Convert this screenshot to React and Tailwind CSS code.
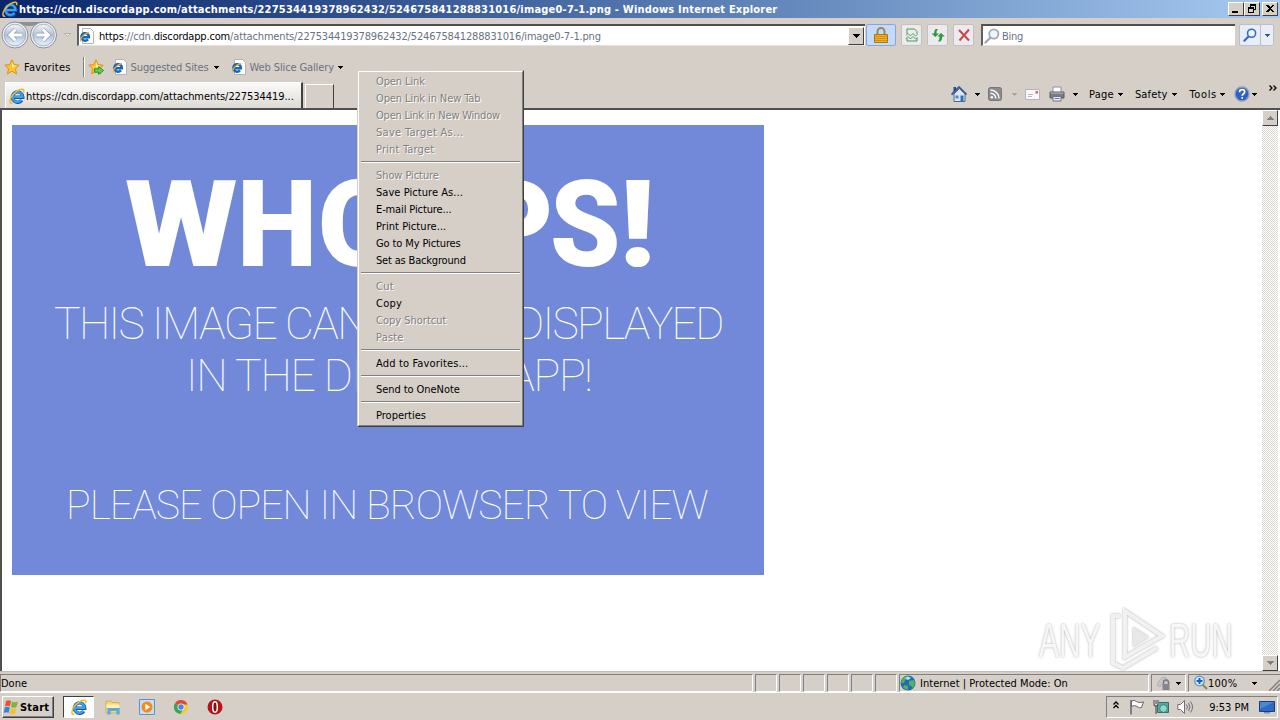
import { useLayoutEffect, useRef } from 'react';

const Label = ({ w, children, className = '' }) => {
    const ref = useRef(null);

    useLayoutEffect(() => {
        const el = ref.current;
        el.style.letterSpacing = '0px';
        const natural = el.offsetWidth;
        el.style.letterSpacing = `${(w - natural) / el.textContent.length}px`;
    }, [w, children]);

    return <span ref={ref} className={`inline-block whitespace-pre shrink-0 pt-0.5 ${className}`}>{children}</span>;
};

const IeIcon = ({ className = 'size-4' }) => (
    <svg viewBox="0 0 16 16" className={`shrink-0 ${className}`} fill="none">
        <path d="M4.5 9.3h9.3a5.2 5.2 0 1 0-1 2.9" stroke="#1459a8" strokeWidth="3.4" />
        <path d="M4.5 9h9a5 5 0 1 0-1 2.9" stroke="#3f9fe8" strokeWidth="2.2" />
        <path d="M3.2 15C.6 15.8.2 13 2 9.5 4.6 4.5 10.5.6 13.6 1.2c1.3.3 1.5 1.6.9 3" stroke="#f3b92b" strokeWidth="1.5" />
    </svg>
);

const PageIeIcon = () => (
    <svg viewBox="0 0 16 16" className="size-4 shrink-0" fill="none">
        <path d="M3.5.5h8l3 3v12h-11z" fill="#fdfdfd" stroke="#b4b4b4" />
        <path d="M3.3 9.2h6.600a3.800 3.800 0 1 0-.9 2.200" stroke="#1766b8" strokeWidth="2.4" />
        <path d="M1.6 13.500C.6 11 4 6 10 4.400" stroke="#e8b53a" strokeWidth="1.1" />
    </svg>
);

const Caret = ({ className = 'text-black' }) => (
    <svg viewBox="0 0 5 3" className={`w-[5px] h-[3px] shrink-0 ${className}`} shapeRendering="crispEdges">
        <path d="M0 0h5L2.5 3z" fill="currentColor" />
    </svg>
);

const Star = ({ arrow }) => (
    <svg viewBox="0 0 16 16" className="size-4 shrink-0">
        <path d="M8 .8l2.200 4.800 5 .6-3.700 3.500 1 5.200L8 12.300l-4.500 2.600 1-5.200L.8 6.200l5-.6z" fill="#ffc530" stroke="#d98a14" strokeWidth=".9" />
        <path d="M8 2.800l1.500 3.500 2.700.4-4.200 2z" fill="#fff0a0" />
        {arrow && <path d="M6.500 9.700h4.200V7.600l4.800 3.900-4.800 3.900v-2.200H6.500z" fill="#5ed04c" stroke="#20872a" strokeWidth=".9" />}
    </svg>
);

const NavButtons = () => (
    <svg viewBox="0 0 58 28" className="w-[58px] h-7 shrink-0" fill="none">
        <defs>
            <linearGradient id="glass" x1="0" y1="0" x2="0" y2="1">
                <stop offset="0" stopColor="#f4f6f9" />
                <stop offset=".5" stopColor="#b3c0d6" />
                <stop offset="1" stopColor="#e6f4ff" />
            </linearGradient>
        </defs>
        <path d="M12 1h34q-9 4-17 4T12 1z" fill="#8d8f9b" />
        {[15, 43.5].map((x) => (
            <g key={x}>
                <circle cx={x} cy="14" r="13" fill="#edf0f4" stroke="#8a8f9d" strokeWidth="1" />
                <circle cx={x} cy="14" r="10.800" fill="url(#glass)" stroke="#98a5b9" strokeWidth=".8" />
            </g>
        ))}
        <path d="M22 14H10m5.500-5.500L10 14l5.500 5.500M36.500 14h12M43 8.500l5.500 5.500-5.500 5.500" stroke="#8c9db8" strokeWidth="4.400" />
        <path d="M22 14H10m5.500-5.500L10 14l5.500 5.500M36.500 14h12M43 8.500l5.500 5.500-5.500 5.500" stroke="#fff" strokeWidth="3" />
    </svg>
);

const Magnifier = ({ className, color }) => (
    <svg viewBox="0 0 16 16" className={`shrink-0 ${className}`} fill="none">
        <path d="M1.500 14.500l5-5" stroke={color} strokeWidth="2.400" strokeLinecap="round" />
        <circle cx="9.800" cy="6" r="4.600" fill="#eef5ff" stroke={color} strokeWidth="1.800" />
    </svg>
);

const CaptionButton = ({ children }) => (
    <button className="w-4 h-3.5 bg-[#d6cfc8] border border-t-white border-l-white border-r-[#404040] border-b-[#404040]">
        <svg viewBox="0 0 14 12" className="w-3.5 h-3" shapeRendering="crispEdges">{children}</svg>
    </button>
);

const TitleBar = () => (
    <header className="flex items-center h-[18px] pl-0.5 pr-0.5 bg-linear-to-r from-[#0a246a] to-[#a6caf0]">
        <IeIcon />
        <Label w={758} className="ml-px font-bold text-white">https://cdn.discordapp.com/attachments/227534419378962432/524675841288831016/image0-7-1.png - Windows Internet Explorer</Label>
        <div className="flex ml-auto">
            <CaptionButton><path d="M3 8h6v2H3z" /></CaptionButton>
            <CaptionButton><path d="M5 1h6v6H9V6h1V3H6v1H5zM3 4h6v6H3zm1 2v3h4V6z" fillRule="evenodd" /></CaptionButton>
            <div className="w-0.5" />
            <CaptionButton><path d="M3 2h2l2 2 2-2h2L8 5.500 11 9H9L7 7 5 9H3l3-3.500z" /></CaptionButton>
        </div>
    </header>
);

const ToolButton = ({ children, className }) => (
    <button className={`flex items-center justify-center h-[22px] border rounded-xs ${className}`}>{children}</button>
);

const AddressBar = () => (
    <div className="flex items-center h-[34px]">
        <div className="w-[57px] flex"><NavButtons /></div>
        <div className="w-5 flex justify-center">
            <svg viewBox="0 0 7 4" className="w-[7px] h-1"><path d="M.5.5h6l-3 3z" fill="#e8e6e2" stroke="#aaa69f" strokeWidth=".8" /></svg>
        </div>
        <div className="flex items-center w-[788px] h-[22px] bg-white border-t-2 border-l-2 border-t-[#505050] border-l-[#606060] border-b border-b-[#e4e0da]">
            <PageIeIcon />
            <Label w={502} className="ml-1 text-gray-500">
                <span className="text-black">https</span>://cdn.<span className="text-black">discordapp.com</span>/attachments/227534419378962432/524675841288831016/image0-7-1.png
            </Label>
            <button className="flex items-center justify-center w-4 h-[18px] ml-auto mr-px bg-[#d6cfc8] border border-t-white border-l-white border-r-[#404040] border-b-[#404040]">
                <svg viewBox="0 0 7 4" className="w-[7px] h-1" shapeRendering="crispEdges"><path d="M0 0h7L3.500 4z" /></svg>
            </button>
        </div>
        <ToolButton className="w-[30px] ml-px border-[#7fa9e6] bg-[#c4daf8]">
            <svg viewBox="0 0 14 16" className="w-3.5 h-4" fill="none">
                <path d="M3.500 8V4.500a3.500 3.500 0 0 1 7 0V8" stroke="#9a8a58" strokeWidth="2" />
                <path d="M.5 7.500h13v8H.5z" fill="#f0b020" stroke="#a87818" />
                <path d="M1 9.500h12M1 11.500h12M1 13.500h12" stroke="#c78a14" strokeWidth=".8" />
            </svg>
        </ToolButton>
        <ToolButton className="w-[21px] ml-[5px] border-[#c2c0c4] bg-[#eceaee]">
            <svg viewBox="0 0 14 14" className="size-3.5 shrink-0" fill="none" stroke="#459a4a">
                <path d="M2 6V1h7.500L12 3.500V6M2 10v3h10v-3" />
                <path d="M1 7.500l2-2 2.500 2.500L8 5.500 10.500 8l2-1.500M1 10.500l2-2L5.500 11 8 8.500l2.500 2.500 2-1.500" strokeWidth=".9" />
            </svg>
        </ToolButton>
        <ToolButton className="w-[21px] ml-[5px] border-[#c2c0c4] bg-[#eceaee]">
            <svg viewBox="0 0 14 14" className="size-3.5 shrink-0" fill="#2f9a3c">
                <path d="M4.500 1H7Q5 3 5.500 5.500H8L4.300 9 .5 5.500H3Q3 3 4.500 1z" />
                <path d="M9.500 13.500H7Q9 11.500 8.500 8.500H6.300L10 5l3.800 3.500h-2.500q.3 3-1.800 5z" />
            </svg>
        </ToolButton>
        <ToolButton className="w-[21px] ml-[5px] border-[#c2c0c4] bg-[#eceaee]">
            <svg viewBox="0 0 14 14" className="size-3.5 shrink-0" fill="none" stroke="#c8484c" strokeWidth="2">
                <path d="M2 2l10 10.500M12 1.500L2.500 12.500" />
            </svg>
        </ToolButton>
        <div className="flex items-center w-[254px] h-[22px] ml-[7px] bg-white border-t-2 border-l-2 border-t-[#505050] border-l-[#606060] border-b border-b-[#e4e0da]">
            <Magnifier className="size-4 ml-px" color="#a3a8b5" />
            <Label w={21} className="ml-0.5 text-gray-500">Bing</Label>
        </div>
        <div className="flex ml-1">
            <ToolButton className="w-[22px] border-[#b7bfd0] bg-[#e9edf6]"><Magnifier className="size-3.5" color="#2e6bc8" /></ToolButton>
            <ToolButton className="w-[14px] border-[#b7bfd0] bg-[#e9edf6] -ml-px"><Caret className="text-[#2358a8]" /></ToolButton>
        </div>
    </div>
);

const FavoritesBar = () => (
    <div className="flex items-center h-[30px] pl-1">
        <Star />
        <Label w={47} className="ml-1 -mt-px">Favorites</Label>
        <div className="w-0.5 h-5 ml-3 border-l border-[#808080] bg-white" />
        <div className="ml-[3px] flex"><Star arrow /></div>
        <div className="ml-2 flex"><PageIeIcon /></div>
        <Label w={78} className="ml-[3px] text-gray-500">Suggested Sites</Label>
        <div className="ml-[5px] flex"><Caret /></div>
        <div className="ml-3 flex"><PageIeIcon /></div>
        <Label w={84} className="ml-[3px] text-gray-500">Web Slice Gallery</Label>
        <div className="ml-1 flex"><Caret /></div>
    </div>
);

const TabRow = () => (
    <div className="flex items-center h-[26px] pl-[5px]">
        <div className="flex items-center w-[298px] h-[26px] pl-[3px] bg-linear-to-b from-[#fbfafa] to-[#dedad5] border-t border-t-white border-l border-l-white border-r-2 border-r-[#404040]">
            <IeIcon />
            <Label w={268} className="ml-px">https://cdn.discordapp.com/attachments/227534419...</Label>
        </div>
        <div className="w-[29px] h-[24px] ml-0.5 self-end border-t border-l border-t-white border-l-white border-r border-r-[#404040]" />
        <div className="flex items-center w-[329px] ml-auto -mt-1 pt-0.5">
            <svg viewBox="0 0 16 16" className="size-4">
                <path d="M3 8v7.500h11V8L8.500 2.500z" fill="#dce7f5" stroke="#46689e" />
                <path d="M.5 8.500L8 1l7.500 7.500" fill="none" stroke="#3b5a9c" strokeWidth="1.800" />
                <path d="M2.500 1h2.500v3l-2.500 2z" fill="#29498c" />
                <path d="M9.500 9.500h3v6h-3z" fill="#2c72a8" />
                <path d="M4.500 9.500h3v3h-3z" fill="#5685c4" />
            </svg>
            <div className="ml-2 flex"><Caret /></div>
            <svg viewBox="0 0 14 14" className="size-3.5 ml-2" fill="none">
                <rect x=".5" y=".5" width="13" height="13" rx="2" fill="#8c8c8c" stroke="#777" />
                <circle cx="3.800" cy="10.300" r="1.300" fill="#fff" />
                <path d="M2.500 6.200a5.300 5.300 0 0 1 5.300 5.300M2.500 3a8.500 8.500 0 0 1 8.500 8.500" stroke="#fff" strokeWidth="1.400" />
            </svg>
            <div className="ml-[10px] flex"><Caret className="text-[#a8a39c]" /></div>
            <svg viewBox="0 0 15 11" className="w-[15px] h-[11px] ml-2">
                <path d="M.5.5h14v10H.5z" fill="#f8f8f8" stroke="#b5b5b8" />
                <path d="M10.500 2h2.500v2.500h-2.500z" fill="#c86a6a" />
                <path d="M3 5.500h5M3 7.500h4" stroke="#bbb" />
            </svg>
            <svg viewBox="0 0 16 16" className="size-4 ml-[9px]">
                <path d="M4 1h8v6H4z" fill="#fff" stroke="#909098" />
                <path d="M1 6h14v6H1z" fill="#777c86" stroke="#555b66" />
                <path d="M1.500 7h13" stroke="#b8bcc5" />
                <path d="M4 10.500h8v4.500H4z" fill="#e8edf5" stroke="#70747e" />
                <path d="M5.500 12.500h5" stroke="#4e83c8" />
            </svg>
            <div className="ml-2 flex"><Caret /></div>
            <Label w={25} className="ml-[11px]">Page</Label>
            <div className="ml-1 flex"><Caret /></div>
            <Label w={33} className="ml-3">Safety</Label>
            <div className="ml-1 flex"><Caret /></div>
            <Label w={27} className="ml-[13px]">Tools</Label>
            <div className="ml-[3px] flex"><Caret /></div>
            <svg viewBox="0 0 16 16" className="size-4 ml-[9px]">
                <circle cx="8" cy="8" r="7" fill="#2f5fc4" stroke="#8d9cc0" strokeWidth="1.400" />
                <path d="M5.500 6.200q0-2.600 2.600-2.600t2.600 2.300c0 1.800-2.500 1.900-2.500 3.900M8.200 11v1.800" fill="none" stroke="#fff" strokeWidth="1.700" />
            </svg>
            <div className="ml-0.5 flex"><Caret /></div>
            <svg viewBox="0 0 8 6" className="w-2 h-1.5 ml-3 -mt-3" fill="none" stroke="#000" strokeWidth="1.300">
                <path d="M.5.5L3 3 .5 5.500M4.500.5L7 3 4.500 5.500" />
            </svg>
        </div>
    </div>
);

const ScrollButton = ({ d }) => (
    <button className="flex items-center justify-center w-4 h-4 bg-[#d6cfc8] border border-t-white border-l-white border-r-[#404040] border-b-[#404040]">
        <svg viewBox="0 0 7 4" className="w-[7px] h-1" shapeRendering="crispEdges"><path d={d} fill="#808080" /></svg>
    </button>
);

const Whoops = () => (
    <div className="w-[752px] h-[450px] mt-[15px] ml-2.5 bg-[#7289da] text-white flex flex-col shrink-0 overflow-hidden">
        <h1 className="pl-[113px] pt-[38px] h-[160px] font-[Roboto] font-black text-[120px] leading-[121px] flex">
            <Label w={112} className="origin-left scale-x-[1.08]">W</Label>
            <Label w={80} className="origin-left scale-x-[0.95]">H</Label>
            <Label w={232}>OOP</Label>
            <Label w={69} className="origin-left scale-x-[0.94]">S</Label>
            <Label w={32} className="origin-left scale-x-[1.1]">!</Label>
        </h1>
        <p className="pl-[42px] h-[52px] pt-[11px] font-[Roboto] font-thin text-[44.500px] leading-[52px] flex">
            <Label w={669}>THIS IMAGE CANNOT BE DISPLAYED</Label>
        </p>
        <p className="pl-[174px] h-[52px] pt-[11px] font-[Roboto] font-thin text-[44.500px] leading-[52px] flex">
            <Label w={406}>IN THE DISCORD APP!</Label>
        </p>
        <p className="pl-[54px] mt-[88px] font-[Roboto] font-thin text-[41px] leading-[52px] flex">
            <Label w={642}>PLEASE OPEN IN BROWSER TO VIEW</Label>
        </p>
    </div>
);

const Watermark = () => (
    <div className="absolute left-[1039px] top-[607px] flex items-center h-[66px] font-['Liberation_Sans'] text-[49px] leading-[66px] text-[#f7f7f7] [text-shadow:0_0_3px_#aaa]">
        <span className="inline-block w-[70px] origin-left scale-x-[0.61]">ANY</span>
        <svg viewBox="0 0 56 64" className="w-14 h-16 shrink-0 drop-shadow-[0_0_1px_#aaa]" fill="none" stroke="#f1f1f1" strokeWidth="4">
            <path d="M16 3v46l37-21z" />
            <path d="M11 8H4v47l10 5 34-20" />
            <path d="M24 19v20l16-10z" fill="#e8e8e8" stroke="none" />
        </svg>
        <span className="inline-block w-[66px] ml-1 origin-left scale-x-[0.6]">RUN</span>
    </div>
);

const menuGroups = [
    [
        { text: 'Open Link', w: 49, off: true },
        { text: 'Open Link in New Tab', w: 104, off: true },
        { text: 'Open Link in New Window', w: 124, off: true },
        { text: 'Save Target As...', w: 87, off: true },
        { text: 'Print Target', w: 58, off: true },
    ],
    [
        { text: 'Show Picture', w: 63, off: true },
        { text: 'Save Picture As...', w: 87 },
        { text: 'E-mail Picture...', w: 76 },
        { text: 'Print Picture...', w: 70 },
        { text: 'Go to My Pictures', w: 85 },
        { text: 'Set as Background', w: 90 },
    ],
    [
        { text: 'Cut', w: 18, off: true },
        { text: 'Copy', w: 26 },
        { text: 'Copy Shortcut', w: 70, off: true },
        { text: 'Paste', w: 28, off: true },
    ],
    [{ text: 'Add to Favorites...', w: 92 }],
    [{ text: 'Send to OneNote', w: 84 }],
    [{ text: 'Properties', w: 50 }],
];

const ContextMenu = () => (
    <div className="absolute left-[357px] top-[70px] w-[167px] border border-[#d6cfc8] border-r-[#404040] border-b-[#404040] bg-[#d6cfc8]">
        <div className="border border-t-white border-l-white border-r-[#808080] border-b-[#808080] pb-0.5 px-0.5">
            {menuGroups.map((group, i) => (
                <div key={i}>
                    {i > 0 && <div className="h-[9px] pt-1"><div className="h-0.5 bg-white border-t border-[#808080]" /></div>}
                    {group.map(({ text, w, off }) => (
                        <div key={text} className="flex items-center h-[17px] pl-[15px]">
                            <Label w={w} className={off ? 'text-[#808080] [text-shadow:1px_1px_0_#fff]' : ''}>{text}</Label>
                        </div>
                    ))}
                </div>
            ))}
        </div>
    </div>
);

const StatusPane = ({ className, children }) => (
    <div className={`flex items-center h-[18px] border border-t-[#808080] border-l-[#808080] border-r-white border-b-white ${className}`}>{children}</div>
);

const StatusBar = () => (
    <div className="flex gap-0.5 h-[21px] pt-0.5 border-t border-[#c0bcb5]">
        <StatusPane className="w-[753px]"><Label w={26}>Done</Label></StatusPane>
        {[0, 1, 2, 3, 4, 5].map((n) => <StatusPane key={n} className="w-[22px]" />)}
        <StatusPane className="w-[250px]">
            <svg viewBox="0 0 16 16" className="size-4">
                <circle cx="8" cy="8" r="7.500" fill="#2468b8" />
                <path d="M2 4q3-4 7-3l-1 3-3 1-1 3-3 0zM9 6l5-1q2 4-1 8l-2-2-2-1zM4 10l4 1v4q-4-1-5-3z" fill="#52b45a" />
                <path d="M5 3q4-2 6 0L8 5z" fill="#b8e4ff" />
            </svg>
            <Label w={148} className="ml-1">Internet | Protected Mode: On</Label>
        </StatusPane>
        <StatusPane className="w-[35px] justify-between px-1">
            <svg viewBox="0 0 16 16" className="size-4">
                <path d="M1 10q3-8 8-8l5 6-5 3-2-3-3 4z" fill="#c6c3c6" stroke="#a0a0a5" strokeWidth=".6" />
                <path d="M7.500 9V7.500a2.500 2.500 0 0 1 5 0V9" fill="none" stroke="#77777c" strokeWidth="1.300" />
                <path d="M6.500 9h7v6h-7z" fill="#85858a" />
            </svg>
            <Caret />
        </StatusPane>
        <StatusPane className="flex-1 pl-1 border-r-0">
            <svg viewBox="0 0 16 16" className="size-4" fill="none">
                <path d="M9.500 9.500l4.500 4.500" stroke="#a08050" strokeWidth="2.200" />
                <circle cx="6.500" cy="6" r="4.800" fill="#d8ebff" stroke="#5f93cc" strokeWidth="1.300" />
                <path d="M6.500 3v6M3.500 6h6" stroke="#1c5fc0" strokeWidth="2" />
            </svg>
            <Label w={29} className="-ml-px">100%</Label>
            <div className="ml-[15px] flex"><Caret /></div>
            <svg viewBox="0 0 12 12" className="size-3 ml-auto self-end" stroke="#808080" strokeWidth="1.500"><path d="M1 12L12 1M5 12l7-7M9 12l3-3" /></svg>
        </StatusPane>
    </div>
);

const Taskbar = () => (
    <div className="flex items-center h-[27px] pl-0.5 pr-0.5 border-t border-white">
        <button className="flex items-center w-[52px] h-[22px] mt-px border border-t-white border-l-white border-r-[#404040] border-b-[#404040] shadow-[inset_-1px_-1px_#808080]">
            <svg viewBox="0 0 16 16" className="size-4 shrink-0">
                <path d="M3 2q3-1.500 5 0L7 7.500q-2-1.500-5 0z" fill="#e8542c" />
                <path d="M9 2.500q3 1.500 6 0L13.500 8q-3 1.500-5.500 0z" fill="#78b83c" />
                <path d="M1.800 8.500q3-1.500 5 0l-1.200 5.500q-2-1.500-5 0z" fill="#3a82d8" />
                <path d="M7.800 9q3 1.500 5.500 0L12 14.500q-3 1.500-5.500 0z" fill="#f8c030" />
            </svg>
            <Label w={29} className="ml-px font-bold">Start</Label>
        </button>
        <div className="flex items-center justify-center w-[31px] h-[22px] mt-px ml-[9px] bg-white border border-t-[#404040] border-l-[#404040] border-r-white border-b-white"><IeIcon /></div>
        <svg viewBox="0 0 16 16" className="size-4 mt-0.5 ml-[11px]">
            <path d="M1 2h5l1 1.500h7V14H1z" fill="#f4d878" stroke="#c8a850" strokeWidth=".8" />
            <path d="M1.500 5.500h13V9h-13z" fill="#fdf0b4" />
            <path d="M2.500 15.500V9h12v6.500h-3V12h-6v3.500z" fill="#5aa8dc" />
        </svg>
        <svg viewBox="0 0 16 16" className="size-4 mt-0.5 ml-[18px]">
            <path d="M.5.5h15v15H.5z" fill="#c6ddf4" stroke="#5c93cc" />
            <circle cx="8" cy="8" r="5.500" fill="#f58a1c" />
            <path d="M6.300 4.800v6.400L11.300 8z" fill="#fff" />
        </svg>
        <svg viewBox="0 0 16 16" className="size-4 mt-0.5 ml-[18px]">
            <circle cx="8" cy="8" r="7" fill="#f4c832" />
            <path d="M8 8L2 4.300A7 7 0 0 1 14.500 5.500H8z" fill="#df4836" />
            <path d="M8 8L2 4.300A7 7 0 0 0 7.300 15l3-5z" fill="#39a552" />
            <circle cx="8" cy="8" r="3.500" fill="#f2f4f4" />
            <circle cx="8" cy="8" r="2.700" fill="#4688e8" />
        </svg>
        <svg viewBox="0 0 16 16" className="size-4 mt-0.5 ml-[18px]">
            <circle cx="8" cy="8" r="7.500" fill="#b81418" />
            <ellipse cx="8" cy="8" rx="2.300" ry="5.200" fill="#8c0d10" stroke="#fff" strokeWidth="1.500" />
        </svg>
        <div className="flex items-center w-[172px] h-[22px] mt-px ml-auto pl-1.5 pr-0.5 border border-t-[#808080] border-l-[#808080] border-r-white border-b-white">
            <svg viewBox="0 0 6 8" className="w-1.5 h-2 -mt-1" fill="none" stroke="#000" strokeWidth="1.300"><path d="M.5 3.500L3 1l2.500 2.500M.5 7L3 4.500 5.500 7" /></svg>
            <svg viewBox="0 0 16 16" className="size-4 ml-2.5" fill="#fff" stroke="#65656b">
                <path d="M2 1v14.500" strokeWidth="1.500" />
                <path d="M2.500 2q3-1.500 5 .5t7 .5l-2 5.500q-2 1-4.500-1t-5.500 0z" />
            </svg>
            <svg viewBox="0 0 16 16" className="size-4 ml-2">
                <path d="M4.500 3.500h11v10h-11z" fill="#56aaa0" stroke="#3c6b6c" />
                <path d="M.5 1h5v4.500h-5z" fill="#eee" />
                <path d="M1 1v4q0 2 2 2v8M5 1v4q0 2-2 2M3 1v4" fill="none" stroke="#55555c" strokeWidth="1.200" />
                <circle cx="10.500" cy="9.500" r="3.800" fill="#8fd8c8" stroke="#267a7a" strokeWidth=".8" />
            </svg>
            <svg viewBox="0 0 16 16" className="size-4 ml-2" fill="none" stroke="#707078">
                <path d="M.8 5.500H3.500L7.500 1.500v13L3.500 10.500H.8z" fill="#fff" />
                <path d="M9.500 5.500q2 2.500 0 5M11.500 4q3 4 0 8M13.500 2.500q4 5.500 0 11" />
            </svg>
            <Label w={40} className="ml-auto">9:53 PM</Label>
            <svg viewBox="0 0 16 14" className="w-4 h-3.5 ml-2.5">
                <path d="M.5 1.500h15v10H.5z" fill="#2c6bc4" stroke="#1c3c78" />
                <path d="M1 2h14L1 9z" fill="#4c88d4" />
                <path d="M5 12h6v1.500H5z" fill="#7890b0" />
            </svg>
        </div>
    </div>
);

export default function App() {
    return (
        <div className="relative flex flex-col w-[1280px] h-[720px] overflow-hidden bg-[#d6cfc8] text-black text-[11px] leading-[14px] font-['DejaVu_Sans_Condensed','DejaVu_Sans',sans-serif]">
            <TitleBar />
            <AddressBar />
            <FavoritesBar />
            <TabRow />
            <main className="flex h-[563px] bg-white border-t-2 border-l-2 border-[#505050]">
                <Whoops />
                <div className="flex flex-col justify-between w-4 ml-auto mr-0.5 bg-[repeating-conic-gradient(#fff_0_25%,#dcd8d2_0_50%)] bg-size-[2px_2px]">
                    <ScrollButton d="M0 4h7L3.500 0z" />
                    <ScrollButton d="M0 0h7L3.500 4z" />
                </div>
            </main>
            <StatusBar />
            <Taskbar />
            <Watermark />
            <ContextMenu />
        </div>
    );
}
